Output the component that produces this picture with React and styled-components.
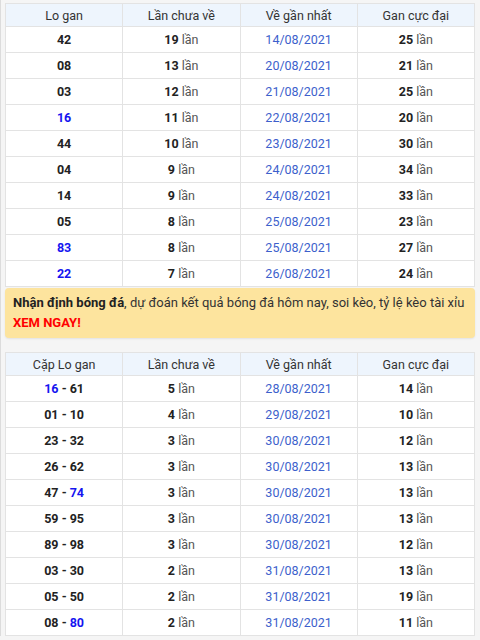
import React from "react";
import styled, { createGlobalStyle } from "styled-components";

const GlobalStyle = createGlobalStyle`
  html, body {
    margin: 0;
    padding: 0;
    background: #f5f5f5;
    font-family: Roboto, "Liberation Sans", Arial, sans-serif;
  }
`;

const loGan = [
  { so: "42", lan: 19, ngay: "14/08/2021", max: 25 },
  { so: "08", lan: 13, ngay: "20/08/2021", max: 21 },
  { so: "03", lan: 12, ngay: "21/08/2021", max: 25 },
  { so: "16", hot: true, lan: 11, ngay: "22/08/2021", max: 20 },
  { so: "44", lan: 10, ngay: "23/08/2021", max: 30 },
  { so: "04", lan: 9, ngay: "24/08/2021", max: 34 },
  { so: "14", lan: 9, ngay: "24/08/2021", max: 33 },
  { so: "05", lan: 8, ngay: "25/08/2021", max: 23 },
  { so: "83", hot: true, lan: 8, ngay: "25/08/2021", max: 27 },
  { so: "22", hot: true, lan: 7, ngay: "26/08/2021", max: 24 },
];

const capLo = [
  { a: "16", aHot: true, b: "61", lan: 5, ngay: "28/08/2021", max: 14 },
  { a: "01", b: "10", lan: 4, ngay: "29/08/2021", max: 10 },
  { a: "23", b: "32", lan: 3, ngay: "30/08/2021", max: 12 },
  { a: "26", b: "62", lan: 3, ngay: "30/08/2021", max: 13 },
  { a: "47", b: "74", bHot: true, lan: 3, ngay: "30/08/2021", max: 13 },
  { a: "59", b: "95", lan: 3, ngay: "30/08/2021", max: 13 },
  { a: "89", b: "98", lan: 3, ngay: "30/08/2021", max: 12 },
  { a: "03", b: "30", lan: 2, ngay: "31/08/2021", max: 13 },
  { a: "05", b: "50", lan: 2, ngay: "31/08/2021", max: 19 },
  { a: "08", b: "80", bHot: true, lan: 2, ngay: "31/08/2021", max: 11 },
];

const Page = styled.div`
  border-left: 1px solid #dcdcdc;
  padding: 3px 5px 0 4px;
`;

const Table = styled.table`
  width: 470px;
  border-collapse: collapse;
  table-layout: fixed;
  background: #fff;
`;

const Th = styled.th`
  height: 22px;
  padding: 0;
  background: #eef5fd;
  border: 1px solid #e3e3e3;
  font-size: 12.5px;
  font-weight: 400;
  color: #333;
  text-align: center;
`;

const Td = styled.td`
  height: 25px;
  padding: 0;
  border: 1px solid #e3e3e3;
  font-size: 12.5px;
  text-align: center;
  color: #222;
`;

const Num = styled.b`
  font-weight: 700;
  color: ${(p) => (p.$hot ? "#1515f0" : "#222")};
`;

const Unit = styled.span`
  color: #555;
`;

const DateText = styled.span`
  color: #3d5fcc;
`;

const Banner = styled.div`
  margin: 1px 0 14px;
  width: 470px;
  box-sizing: border-box;
  padding: 5px 8px;
  background: #fde49e;
  border-radius: 4px;
  box-shadow: 0 1px 2px rgba(0, 0, 0, 0.08);
  font-size: 13px;
  line-height: 20px;
  color: #333;
`;

const Strong = styled.b`
  color: #222;
`;

const Red = styled.b`
  color: #f00;
`;

const Times = ({ n }) => (
  <>
    <Num>{n}</Num> <Unit>lần</Unit>
  </>
);

const Head = ({ first }) => (
  <thead>
    <tr>
      <Th>{first}</Th>
      <Th>Lần chưa về</Th>
      <Th>Về gần nhất</Th>
      <Th>Gan cực đại</Th>
    </tr>
  </thead>
);

export default function App() {
  return (
    <Page>
      <GlobalStyle />
      <Table>
        <Head first="Lo gan" />
        <tbody>
          {loGan.map((r, i) => (
            <tr key={i}>
              <Td>
                <Num $hot={r.hot}>{r.so}</Num>
              </Td>
              <Td>
                <Times n={r.lan} />
              </Td>
              <Td>
                <DateText>{r.ngay}</DateText>
              </Td>
              <Td>
                <Times n={r.max} />
              </Td>
            </tr>
          ))}
        </tbody>
      </Table>
      <Banner>
        <Strong>Nhận định bóng đá</Strong>, dự đoán kết quả bóng đá hôm nay, soi
        kèo, tỷ lệ kèo tài xỉu <Red>XEM NGAY!</Red>
      </Banner>
      <Table>
        <Head first="Cặp Lo gan" />
        <tbody>
          {capLo.map((r, i) => (
            <tr key={i}>
              <Td>
                <Num $hot={r.aHot}>{r.a}</Num> <Num>-</Num>{" "}
                <Num $hot={r.bHot}>{r.b}</Num>
              </Td>
              <Td>
                <Times n={r.lan} />
              </Td>
              <Td>
                <DateText>{r.ngay}</DateText>
              </Td>
              <Td>
                <Times n={r.max} />
              </Td>
            </tr>
          ))}
        </tbody>
      </Table>
    </Page>
  );
}
